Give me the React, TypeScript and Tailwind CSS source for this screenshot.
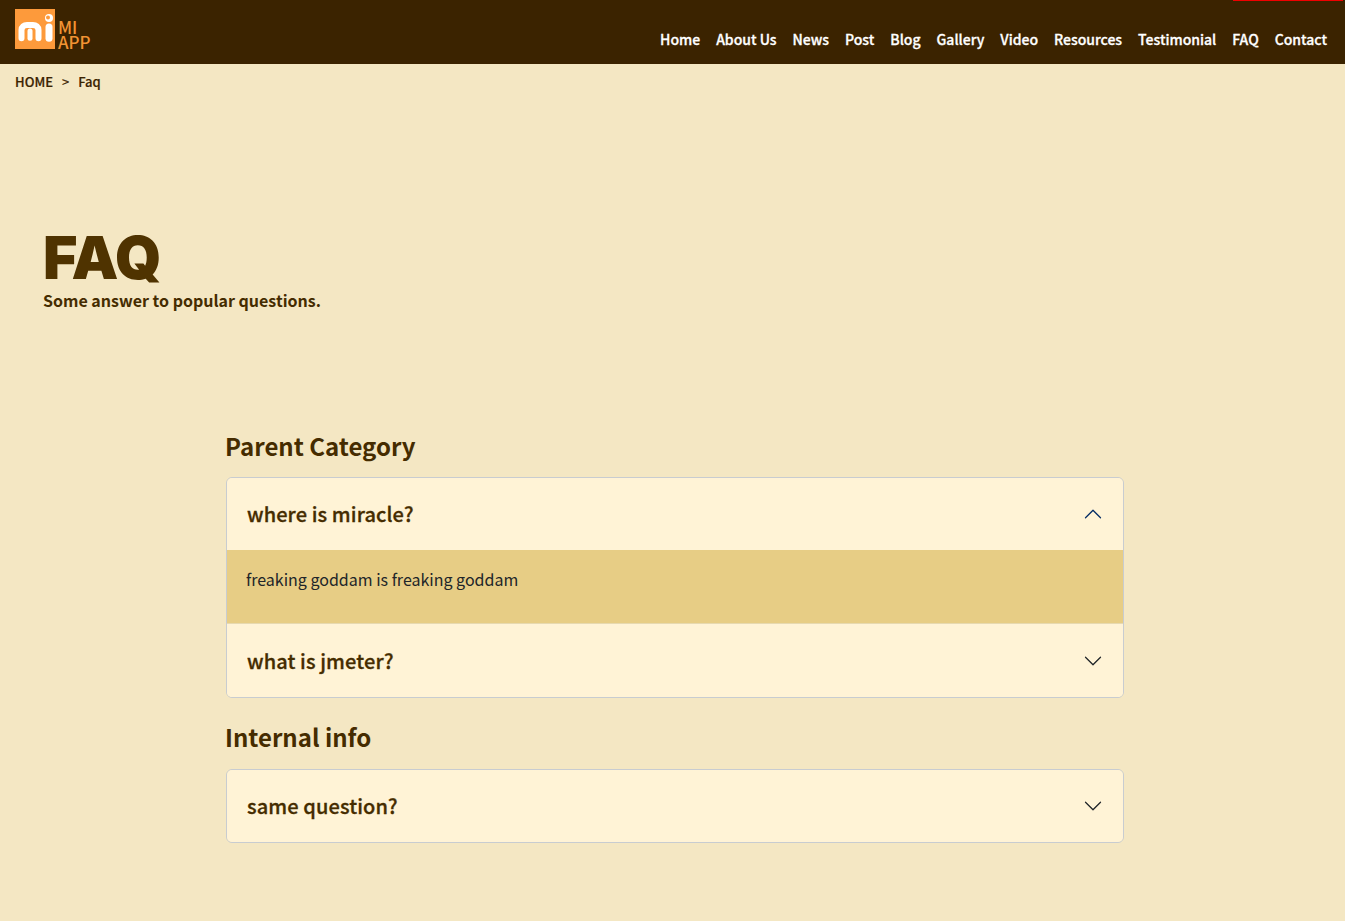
const navLinks = ["Home", "About Us", "News", "Post", "Blog", "Gallery", "Video", "Resources", "Testimonial", "FAQ", "Contact"];

function Logo() {
  return (
    <div className="flex items-end gap-[3px] h-[40px] self-start">
      <svg width="40" height="40" viewBox="0 0 40 40" className="block shrink-0">
        <rect width="40" height="40" fill="#fd9a3b" />
        <path d="M6.5 29.3V21C6.5 18 9 16 12 16H18C21 16 23.5 18 23.5 21V29.3" fill="none" stroke="#fff" strokeWidth="6" strokeLinecap="round" />
        <path d="M15 29.3V22" fill="none" stroke="#fff" strokeWidth="5" strokeLinecap="round" />
        <path d="M34 29.3V18" fill="none" stroke="#fff" strokeWidth="7" strokeLinecap="round" />
        <circle cx="34" cy="9" r="4" fill="#fff" />
        <circle cx="33" cy="8.5" r="2" fill="#fd9a3b" />
      </svg>
      <div className="text-[17px] leading-[15px] font-medium text-[#f29333]">
        <div>MI</div>
        <div>APP</div>
      </div>
    </div>
  );
}

function Chevron({ up }: { up?: boolean }) {
  return (
    <svg width="20" height="20" viewBox="0 0 16 16" fill={up ? "#052c65" : "#212529"} className={up ? "rotate-180" : ""}>
      <path fillRule="evenodd" d="M1.646 4.646a.5.5 0 0 1 .708 0L8 10.293l5.646-5.647a.5.5 0 0 1 .708.708l-6 6a.5.5 0 0 1-.708 0l-6-6a.5.5 0 0 1 0-.708z" />
    </svg>
  );
}

function Item({ question, open, answer }: { question: string; open?: boolean; answer?: string }) {
  return (
    <div>
      <div className="h-[72px] flex items-center justify-between pl-[20px] pr-[20px] bg-[#fff3d6]">
        <span className="text-[20px] font-medium tracking-[0.1px] [-webkit-text-stroke:0.3px_#452c00] text-[#452c00]">{question}</span>
        <Chevron up={open} />
      </div>
      {open && (
        <div className="h-[73px] bg-[#e7cd85] pl-[19px] pt-[17px] text-[16px] leading-[24px] text-[#212529]">{answer}</div>
      )}
    </div>
  );
}

export default function App() {
  return (
    <div className="min-h-[921px] bg-[#f4e7c3] font-['Noto_Sans_CJK_SC','Noto_Sans',sans-serif]">
      <header className="relative h-[64px] bg-[#3b2300] flex justify-between pl-[15px] pr-[18px] pt-[9px]">
        <Logo />
        <nav className="flex gap-[16px] pt-[18px] text-[14px] leading-[24px] font-medium [-webkit-text-stroke:0.3px_#ffffff] text-white">
          {navLinks.map((link) => (
            <a key={link}>{link}</a>
          ))}
        </nav>
        <div className="absolute top-0 right-[2px] w-[110px] h-[1px] bg-[#f00000]" />
      </header>

      <div className="pl-[15px] pt-[8px] flex gap-[9px] text-[13px] leading-[20px] font-medium [-webkit-text-stroke:0.2px_#3b2300] text-[#3b2300]">
        <span>HOME</span>
        <span className="font-normal">&gt;</span>
        <span>Faq</span>
      </div>

      <section className="pl-[43px] pt-[136px]">
        <h1 className="font-['Inter',sans-serif] text-[59px] leading-[59px] tracking-[-0.5px] font-black text-[#4f3300]">FAQ</h1>
        <p className="text-[16px] leading-[26px] font-bold text-[#452c00]">Some answer to popular questions.</p>
      </section>

      <main className="w-[899px] ml-[225px] mt-[117px]">
        <h2 className="text-[24px] leading-[32px] font-bold text-[#452c00] mb-[15px]">Parent Category</h2>
        <div className="ml-[1px] border border-[#c8ccd0] rounded-[6px] overflow-hidden">
          <Item question="where is miracle?" open answer="freaking goddam is freaking goddam" />
          <div className="border-t border-[#e7d9b0] pt-[1px] bg-[#fff3d6]">
            <Item question="what is jmeter?" />
          </div>
        </div>
        <h2 className="text-[24px] leading-[32px] font-bold text-[#452c00] mt-[23px] mb-[16px]">Internal info</h2>
        <div className="ml-[1px] border border-[#c8ccd0] rounded-[6px] overflow-hidden">
          <Item question="same question?" />
        </div>
      </main>
    </div>
  );
}
